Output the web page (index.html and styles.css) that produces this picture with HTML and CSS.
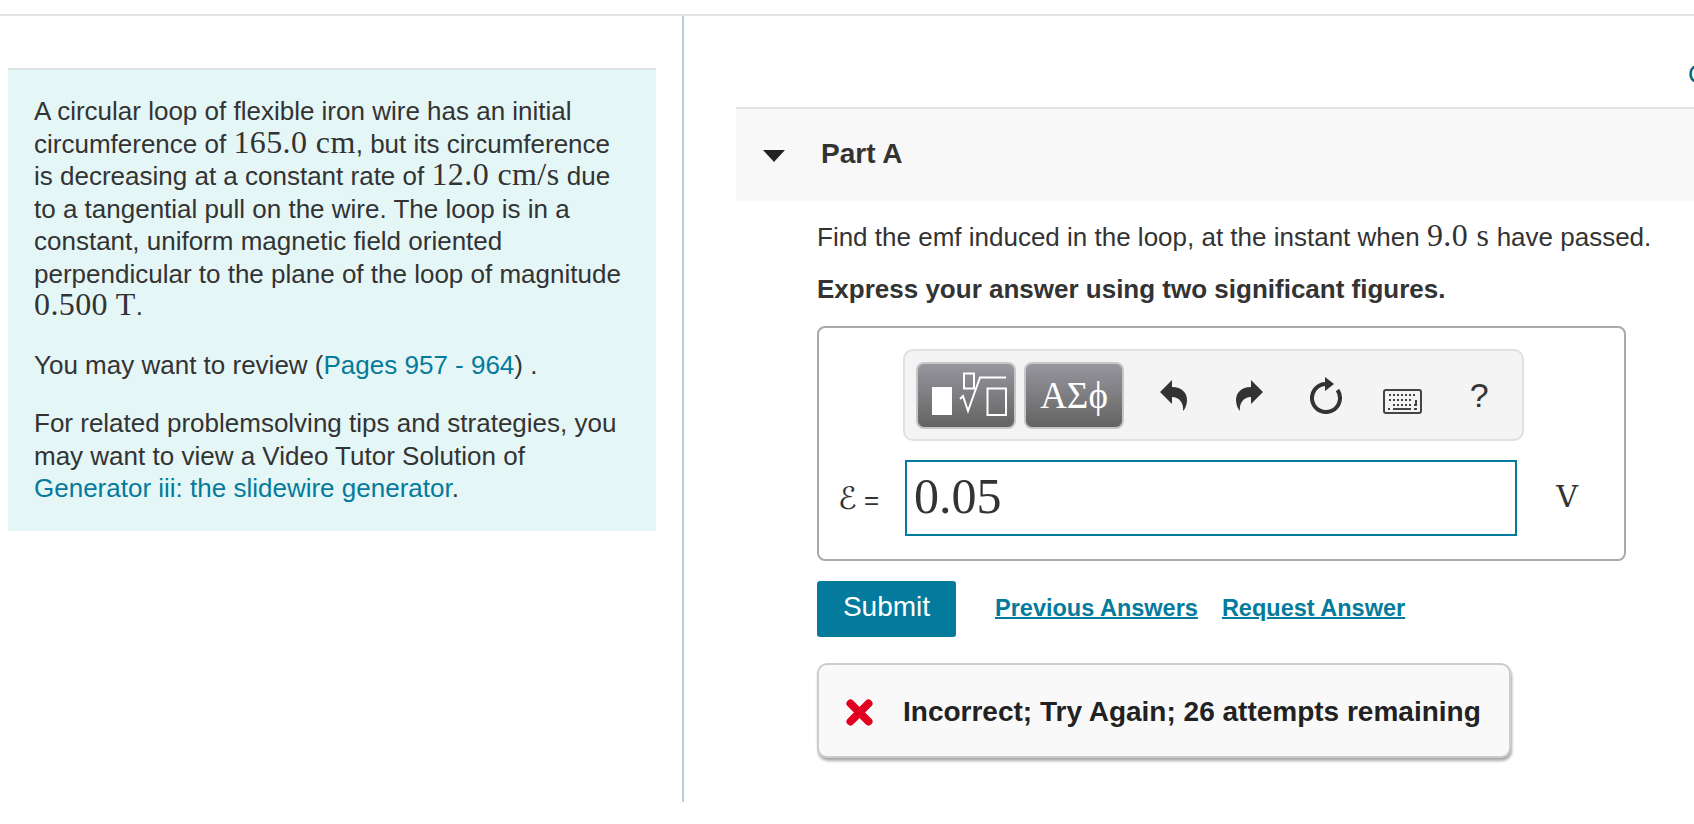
FILE: index.html
```html
<!DOCTYPE html>
<html lang="en">
<head>
  <meta charset="UTF-8">
  <title>Part A</title>
  <link rel="stylesheet" href="styles.css">
</head>
<body>
  <div class="page">
    <aside class="left-col">
      <div class="problem">
        <p>A circular loop of flexible iron wire has an initial circumference of <span class="math">165.0 cm</span>, but its circumference is decreasing at a constant rate of <span class="math">12.0 cm/s</span> due to a tangential pull on the wire. The loop is in a constant, uniform magnetic field oriented perpendicular to the plane of the loop of magnitude <span class="math">0.500 T</span>.</p>
        <p>You may want to review (<a href="#">Pages 957 - 964</a>) .</p>
        <p>For related problemsolving tips and strategies, you may want to view a Video Tutor Solution of <a href="#">Generator iii: the slidewire generator</a>.</p>
      </div>
    </aside>

    <main class="right-col">
      <div class="top-links"><a href="#">Constants</a></div>
      <div class="part-header">
        <span class="caret"></span>
        <h2>Part A</h2>
      </div>
      <div class="part-body">
        <p class="question">Find the emf induced in the loop, at the instant when <span class="math">9.0 s</span> have passed.</p>
        <p class="instruction">Express your answer using two significant figures.</p>

        <div class="answer-box">
          <div class="toolbar">
            <button class="tpl-btn" type="button">
              <svg width="96" height="63" viewBox="2 2 96 63">
                <rect x="16" y="25" width="20" height="28" fill="#fff"/>
                <g fill="none" stroke="#fff" stroke-width="2">
                  <rect x="48" y="11.5" width="10" height="15"/>
                  <path d="M44 37 L47 34 L52 49 L64 15.500 H90"/>
                  <rect x="71.500" y="26.500" width="18.500" height="26.500"/>
                </g>
              </svg>
            </button>
            <button class="tpl-btn greek" type="button">ΑΣϕ</button>
            <span class="tool">
              <svg width="27" height="31" viewBox="0 0 27 31"><path fill="#333" d="M0 12 L12 0 V7 C22 7 27 13 27 20 C27 25 25 29 23 31 C24 24 20 17 12 17 V24 Z"/></svg>
            </span>
            <span class="tool">
              <svg class="flip" width="27" height="31" viewBox="0 0 27 31"><path fill="#333" d="M0 12 L12 0 V7 C22 7 27 13 27 20 C27 25 25 29 23 31 C24 24 20 17 12 17 V24 Z"/></svg>
            </span>
            <span class="tool">
              <svg width="33" height="37" viewBox="0 0 33 37">
                <path fill="none" stroke="#333" stroke-width="4" d="M27.500 13 A14 14 0 1 1 15 7"/>
                <path fill="#333" d="M15 0 L24 7 L15 14 Z"/>
              </svg>
            </span>
            <span class="tool keys">
              <svg width="39" height="25" viewBox="0 0 39 25">
                <rect x="1" y="1" width="37" height="23" rx="2" fill="#f4f4f4" stroke="#444" stroke-width="2"/>
                <path stroke="#444" stroke-width="2" stroke-dasharray="2 2" d="M6 6 H33 M6 11 H30 M10 16 H29"/>
                <path fill="none" stroke="#444" stroke-width="2" d="M33 11 V16 H31 M10 20 H28"/>
                <path stroke="#444" stroke-width="2" d="M5 20 H7 M31 20 H34"/>
              </svg>
            </span>
            <span class="tool help">?</span>
          </div>

          <div class="input-row">
            <label class="var-label"><span class="script-e">ℰ</span> =</label>
            <input class="answer-input" type="text" value="0.05">
            <span class="unit">V</span>
          </div>
        </div>

        <div class="actions">
          <button class="submit" type="button">Submit</button>
          <a class="action-link first" href="#">Previous Answers</a>
          <a class="action-link" href="#">Request Answer</a>
        </div>

        <div class="feedback">
          <svg width="27" height="27" viewBox="0 0 27 27"><path fill="none" stroke="#e1001f" stroke-width="8" stroke-linecap="round" d="M4.500 4.500 L22.500 22.500 M22.500 4.500 L4.500 22.500"/></svg>
          <span>Incorrect; Try Again; 26 attempts remaining</span>
        </div>
      </div>
    </main>
  </div>
</body>
</html>
```

FILE: styles.css
```css
* { margin: 0; padding: 0; box-sizing: border-box; }
html, body { height: 100%; overflow: hidden; }
body {
  font-family: 'Liberation Sans', Arial, sans-serif;
  font-size: 26px;
  color: #333;
  background: #fff;
  padding-top: 14px;
}
a { color: #047b9c; text-decoration: none; }
.math {
  font-family: 'Liberation Serif', serif;
  font-size: 32px;
  line-height: 0;
  letter-spacing: 0.4px;
}

.page {
  display: flex;
  height: 788px;
  border-top: 2px solid #e3e3e3;
}
.left-col {
  width: 684px;
  flex: none;
  padding: 52px 26px 0 8px;
  border-right: 2px solid #b9cbdd;
}
.problem {
  background: #e5f6f7;
  border-top: 2px solid #dfe3e3;
  padding: 25px 26px 26px;
  line-height: 32.500px;
}
.problem p + p { margin-top: 26px; }

.right-col {
  flex: 1;
  min-width: 0;
  overflow: hidden;
  padding-left: 52px;
}
.top-links {
  height: 91px;
  padding: 44px 0 0 952px;
  white-space: nowrap;
  line-height: 28px;
}
.top-links a { color: #00637c; }
.part-header {
  display: flex;
  align-items: center;
  height: 94px;
  background: #f8f8f8;
  border-top: 2px solid #e3e3e3;
  padding: 0 0 2px 27px;
}
.caret {
  width: 0;
  height: 0;
  margin-top: 4px;
  border-left: 11px solid transparent;
  border-right: 11px solid transparent;
  border-top: 12px solid #222;
}
.part-header h2 { font-size: 28px; margin-left: 36px; color: #333; }

.part-body { padding-left: 81px; }
.question { margin-top: 19px; line-height: 34px; white-space: nowrap; }
.instruction { margin-top: 18px; line-height: 34px; font-weight: bold; }

.answer-box {
  width: 809px;
  height: 235px;
  margin-top: 20px;
  border: 2px solid #aaa;
  border-radius: 8px;
  padding: 21px 0 0 84px;
}
.toolbar {
  display: flex;
  align-items: center;
  width: 621px;
  height: 92px;
  padding-left: 11px;
  background: #f4f4f4;
  border: 2px solid #e0e0e0;
  border-radius: 10px;
}
.tpl-btn {
  display: flex;
  align-items: center;
  justify-content: center;
  width: 100px;
  height: 67px;
  margin-right: 8px;
  color: #fff;
  background: linear-gradient(#98969e, #636363);
  border: 2px solid #c6c6c6;
  border-radius: 8px;
}
.greek {
  font-family: 'Liberation Serif', serif;
  font-size: 37px;
  margin-right: 11px;
}
.tool {
  display: flex;
  align-items: center;
  justify-content: center;
  width: 76.500px;
}
.flip { transform: scaleX(-1); }
.keys { padding-top: 12px; }
.help { font-size: 34px; color: #333; }

.input-row {
  display: flex;
  align-items: center;
  margin: 19px 0 0 -84px;
}
.var-label {
  width: 86px;
  padding-left: 19px;
  font-size: 26px;
  white-space: nowrap;
}
.script-e { font-family: 'DejaVu Sans', serif; font-size: 31px; }
.answer-input {
  width: 612px;
  height: 76px;
  padding: 0 0 4px 7px;
  border: 2px solid #047b9c;
  font-family: 'Liberation Serif', serif;
  font-size: 50px;
  color: #333;
  outline: none;
}
.unit {
  width: 100px;
  padding-bottom: 4px;
  text-align: center;
  font-family: 'DejaVu Serif', serif;
  font-size: 30px;
}

.actions {
  display: flex;
  align-items: center;
  margin-top: 20px;
}
.submit {
  width: 139px;
  height: 56px;
  padding-bottom: 5px;
  background: #047b9c;
  color: #fff;
  border: none;
  border-radius: 3px;
  font-family: inherit;
  font-size: 28px;
}
.action-link {
  margin: 0 0 2px 24px;
  font-size: 23.500px;
  font-weight: bold;
  text-decoration: underline;
  text-decoration-thickness: 2px;
}
.action-link.first { margin-left: 39px; }

.feedback {
  display: flex;
  align-items: center;
  gap: 30px;
  width: 694px;
  height: 95px;
  margin-top: 26px;
  padding: 3px 0 0 27px;
  background: #f9f9f9;
  border: 2px solid #ccc;
  border-radius: 10px;
  box-shadow: 1px 3px 3px #aaa;
  font-weight: bold;
  font-size: 28px;
  color: #222;
  white-space: nowrap;
}
```
